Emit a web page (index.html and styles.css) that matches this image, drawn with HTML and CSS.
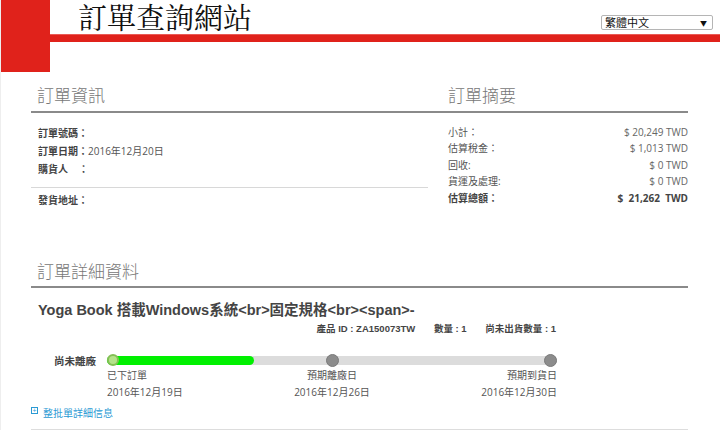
FILE: index.html
```html
<!DOCTYPE html>
<html lang="zh-Hant">

<head>
    <meta charset="UTF-8">
    <title>訂單查詢網站</title>
    <link rel="stylesheet" href="styles.css">
</head>

<body>
    <div class="header">
        <div class="brand-block"></div>
        <div class="header-main">
            <div class="title-row">
                <h1 class="site-title">訂單查詢網站</h1>
                <div class="lang-select">
                    <select>
                        <option>繁體中文</option>
                        <option>English</option>
                    </select>
                </div>
            </div>
            <div class="red-bar"></div>
        </div>
    </div>

    <div class="page">
        <div class="top-section">
            <div class="order-info">
                <h2 class="section-title indent">訂單資訊</h2>
                <div class="info-rows">
                    <div class="info-row"><b>訂單號碼：</b></div>
                    <div class="info-row"><b>訂單日期：</b>2016年12月20日</div>
                    <div class="info-row"><b>購貨人&nbsp;&nbsp;&nbsp;&nbsp;：</b></div>
                </div>
                <div class="info-sep"></div>
                <div class="info-row address"><b>發貨地址：</b></div>
            </div>

            <div class="order-summary">
                <h2 class="section-title">訂單摘要</h2>
                <div class="summary-rows">
                    <div class="summary-row"><span>小計：</span><span>$ 20,249 TWD</span></div>
                    <div class="summary-row"><span>估算稅金：</span><span>$ 1,013 TWD</span></div>
                    <div class="summary-row"><span>回收:</span><span>$ 0 TWD</span></div>
                    <div class="summary-row"><span>貨運及處理:</span><span>$ 0 TWD</span></div>
                    <div class="summary-row total"><span>估算總額：</span><span>$&nbsp;&nbsp;21,262&nbsp;&nbsp;TWD</span></div>
                </div>
            </div>
        </div>

        <div class="detail-section">
            <h2 class="section-title indent">訂單詳細資料</h2>
            <div class="product-name">Yoga Book 搭載Windows系統&lt;br&gt;固定規格&lt;br&gt;&lt;span&gt;-</div>
            <div class="product-meta">
                <span>產品 ID : ZA150073TW</span>
                <span>數量 : 1</span>
                <span>尚未出貨數量 : 1</span>
            </div>

            <div class="progress-row">
                <div class="progress-label">尚未離廠</div>
                <div class="track">
                    <div class="track-fill" style="width: 32.7%;"></div>
                    <div class="dot done first"></div>
                    <div class="dot middle"></div>
                    <div class="dot last"></div>
                </div>
            </div>
            <div class="steps">
                <div class="step">已下訂單<br>2016年12月19日</div>
                <div class="step center">預期離廠日<br>2016年12月26日</div>
                <div class="step right">預期到貨日<br>2016年12月30日</div>
            </div>

            <a class="more-link" href="#"><span class="plus-box">+</span>整批單詳細信息</a>
        </div>
    </div>
</body>

</html>
```

FILE: styles.css
```css
* {
    margin: 0;
    padding: 0;
    box-sizing: border-box;
}

body {
    background: #fff;
    font-family: 'Open Sans', 'Noto Sans CJK TC', sans-serif;
    font-size: 10px;
    color: #555;
    border-left: 1px solid #eee;
}

/* Header */
.header {
    display: flex;
    height: 72px;
}

.brand-block {
    width: 49px;
    height: 72px;
    background: #e0221b;
}

.header-main {
    flex: 1;
}

.title-row {
    height: 34px;
    display: flex;
    justify-content: space-between;
    align-items: flex-start;
    padding-left: 28px;
    padding-right: 7px;
}

.site-title {
    font-family: 'Noto Serif CJK TC', 'Noto Sans CJK TC', serif;
    font-weight: 400;
    font-size: 29px;
    line-height: 34px;
    color: #111;
}

.lang-select {
    position: relative;
    margin-top: 15px;
    width: 112px;
    height: 15px;
}

.lang-select select {
    appearance: none;
    -webkit-appearance: none;
    width: 100%;
    height: 15px;
    border: 1px solid #b5b5b5;
    border-radius: 2px;
    background: #fff;
    font-family: 'Noto Sans CJK TC', sans-serif;
    font-size: 11px;
    line-height: 13px;
    padding: 0 3px;
    color: #111;
}

.lang-select::after {
    content: '▼';
    position: absolute;
    right: 6px;
    top: 3px;
    font-size: 7px;
    color: #111;
    pointer-events: none;
}

.red-bar {
    height: 8px;
    background: #e0221b;
    border-top: 1px solid #ea5a55;
}

/* Page */
.page {
    margin-left: 30px;
    width: 657px;
    padding-top: 12px;
}

.section-title {
    font-weight: 300;
    font-size: 17px;
    line-height: 24px;
    color: #777;
    padding-bottom: 3px;
    border-bottom: 2px solid #8a8a8a;
}

.section-title.indent {
    padding-left: 6px;
}

.top-section {
    display: grid;
    grid-template-columns: 417px 1fr;
}

.info-rows {
    padding-top: 11px;
}

.info-row {
    line-height: 18px;
    padding-left: 7px;
    color: #555;
}

.info-row b {
    color: #444;
    font-weight: 700;
}

.info-sep {
    margin-top: 9px;
    margin-right: 20px;
    border-top: 1px solid #d8d8d8;
}

.info-row.address {
    margin-top: 3px;
}

.summary-rows {
    padding-top: 11px;
}

.summary-row {
    display: flex;
    justify-content: space-between;
    line-height: 16.4px;
    color: #555;
}

.summary-row span:last-child {
    color: #666;
}

.summary-row.total {
    font-weight: 700;
    color: #444;
}

.summary-row.total span:last-child {
    color: #444;
}

/* Details */
.detail-section {
    margin-top: 51px;
    border-bottom: 1px solid #ddd;
    padding-bottom: 8px;
}

.detail-section .section-title {
    padding-bottom: 2px;
}

.product-name {
    margin-top: 12px;
    padding-left: 7px;
    font-family: 'Liberation Sans', 'Noto Sans CJK TC', sans-serif;
    font-weight: 700;
    font-size: 14.5px;
    line-height: 20px;
    color: #444;
}

.product-meta {
    margin-top: 2px;
    width: 525px;
    text-align: right;
    font-family: 'Liberation Sans', 'Noto Sans CJK TC', sans-serif;
    font-weight: 700;
    font-size: 9.5px;
    line-height: 14px;
    color: #444;
}

.product-meta span {
    margin-left: 16px;
}

.progress-row {
    display: flex;
    align-items: center;
    height: 14px;
    margin-top: 17px;
}

.progress-label {
    width: 76px;
    padding-right: 11px;
    text-align: right;
    font-weight: 700;
    font-size: 10.5px;
    color: #444;
}

.track {
    position: relative;
    width: 450px;
    height: 9px;
    background: #dcdcdc;
    border-radius: 5px;
}

.track-fill {
    height: 9px;
    background: #00f000;
    border-radius: 5px;
}

.dot {
    position: absolute;
    top: 50%;
    width: 13px;
    height: 13px;
    margin-top: -6.5px;
    border-radius: 50%;
    background: #8c8c8c;
    border: 1px solid #7a7a7a;
}

.dot.first {
    left: 0;
}

.dot.middle {
    left: 50%;
    margin-left: -6.5px;
}

.dot.last {
    right: 0;
}

.dot.done {
    width: 12px;
    height: 12px;
    margin-top: -6px;
    background: #b4e38a;
    border: 2px solid #84bf55;
}

.steps {
    display: grid;
    grid-template-columns: 1fr 1fr 1fr;
    width: 450px;
    margin-left: 76px;
    line-height: 17px;
    color: #555;
}

.step.center {
    text-align: center;
}

.step.right {
    text-align: right;
}

.more-link {
    display: inline-flex;
    align-items: center;
    margin-top: 4px;
    line-height: 16px;
    color: #2a9ad4;
    text-decoration: none;
    font-size: 10px;
}

.plus-box {
    display: inline-block;
    width: 7px;
    height: 7px;
    border: 1px solid #2a9ad4;
    font-size: 7px;
    line-height: 5px;
    text-align: center;
    margin-right: 5px;
    margin-top: -6px;
}
```
